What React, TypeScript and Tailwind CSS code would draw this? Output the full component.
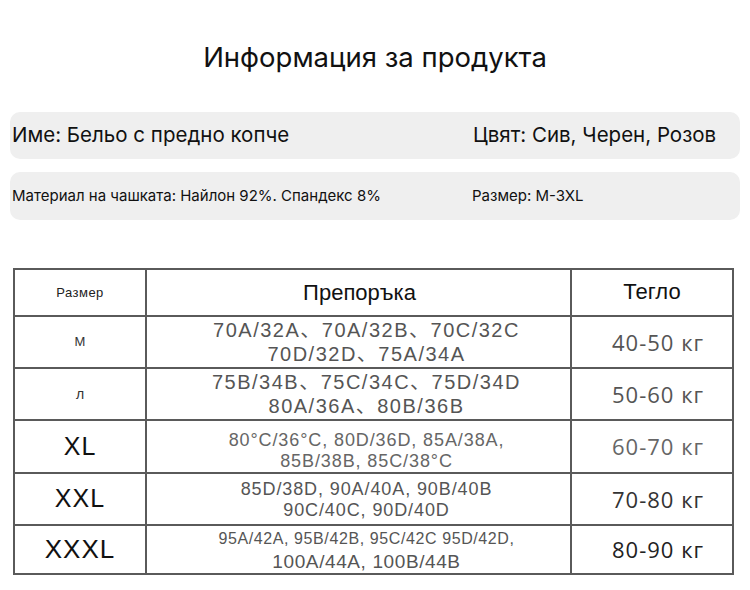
import React from "react";

const rows = [
  {
    size: "M",
    sizeCls: "text-[13px] text-[#333]",
    rec: ["70A/32A、70A/32B、70C/32C", "70D/32D、75A/34A"],
    recCls: "text-[20px] leading-[24px] text-[#555] tracking-[1.5px] font-['Liberation_Sans','Noto_Sans_CJK_SC',sans-serif]",
    w: "40-50 кг",
    wCls: "text-[#555]",
    h: "h-[52px]",
  },
  {
    size: "л",
    sizeCls: "text-[14px] text-[#333]",
    rec: ["75B/34B、75C/34C、75D/34D", "80A/36A、80B/36B"],
    recCls: "text-[20px] leading-[24px] text-[#555] tracking-[1.5px] font-['Liberation_Sans','Noto_Sans_CJK_SC',sans-serif]",
    w: "50-60 кг",
    wCls: "text-[#555]",
    h: "h-[52px]",
  },
  {
    size: "XL",
    sizeCls: "text-[25px] text-[#111] tracking-[1px]",
    rec: ["80°C/36°C, 80D/36D, 85A/38A,", "85B/38B, 85C/38°C"],
    recCls: "text-[18px] leading-[21px] tracking-[0.9px] text-[#666] font-['Liberation_Sans',sans-serif] pt-[9px]",
    w: "60-70 кг",
    wCls: "text-[#666]",
    h: "h-[53px]",
  },
  {
    size: "XXL",
    sizeCls: "text-[25px] text-[#111] tracking-[1px]",
    rec: ["85D/38D, 90A/40A, 90B/40B", "90C/40C, 90D/40D"],
    recCls: "text-[18px] leading-[21px] tracking-[0.9px] text-[#555] font-['Liberation_Sans',sans-serif] pt-[2px]",
    w: "70-80 кг",
    wCls: "text-[#333]",
    h: "h-[52px]",
  },
  {
    size: "XXXL",
    sizeCls: "text-[26px] text-[#111] tracking-[1px]",
    rec: ["95A/42A, 95B/42B, 95C/42C 95D/42D,", "100A/44A, 100B/44B"],
    recCls: "text-[16px] leading-[23px] tracking-[0.6px] text-[#555] font-['Liberation_Sans',sans-serif] [&>div:last-child]:text-[19px]",
    w: "80-90 кг",
    wCls: "text-[#222]",
    h: "h-[47px]",
  },
];

export default function App() {
  return (
    <div className="w-[750px] h-[590px] bg-white relative overflow-hidden font-['Inter',sans-serif]">
      <div className="pt-[39px] text-center text-[27.5px] leading-[36px] text-[#111]">
        Информация за продукта
      </div>

      <div className="mt-[37px] mx-[10px] flex flex-col gap-[13px]">
        <div className="h-[47px] rounded-[10px] bg-[#efefef] flex items-center pl-[2px] text-[20.5px] text-[#111]">
          <div className="w-[461px]">Име: Бельо с предно копче</div>
          <div>Цвят: Сив, Черен, Розов</div>
        </div>
        <div className="h-[48px] rounded-[10px] bg-[#efefef] flex items-center pl-[2px] text-[15px] text-[#111]">
          <div className="w-[460px]">Материал на чашката: Найлон 92%. Спандекс 8%</div>
          <div>Размер: M-3XL</div>
        </div>
      </div>

      <div className="mt-[48px] ml-[13px] w-[721px] border-2 border-[#5a5a5a] font-['Liberation_Sans',sans-serif]">
        <div className="grid grid-cols-[132px_425px_1fr] h-[47px] border-b-2 border-[#5a5a5a]">
          <div className="flex items-center justify-center border-r-2 border-[#5a5a5a] text-[13px] tracking-[0.5px] text-[#222]">
            Размер
          </div>
          <div className="flex items-center justify-center border-r-2 border-[#5a5a5a] text-[22px] text-[#111] pl-[2px]">
            Препоръка
          </div>
          <div className="flex items-center justify-center text-[22px] text-[#111] pb-[3px]">
            Тегло
          </div>
        </div>
        {rows.map((r, i) => (
          <div
            key={r.size}
            className={`grid grid-cols-[132px_425px_1fr] ${r.h} ${i < rows.length - 1 ? "border-b-2 border-[#5a5a5a]" : ""}`}
          >
            <div className={`flex items-center justify-center border-r-2 border-[#5a5a5a] ${r.sizeCls}`}>
              {r.size}
            </div>
            <div className={`flex flex-col items-center justify-center border-r-2 border-[#5a5a5a] pl-[16px] ${r.recCls}`}>
              {r.rec.map((l) => (
                <div key={l}>{l}</div>
              ))}
            </div>
            <div className={`flex items-center justify-center pl-[12px] text-[22px] tracking-[1px] font-['Open_Sans',sans-serif] ${r.wCls}`}>
              {r.w}
            </div>
          </div>
        ))}
      </div>
    </div>
  );
}
